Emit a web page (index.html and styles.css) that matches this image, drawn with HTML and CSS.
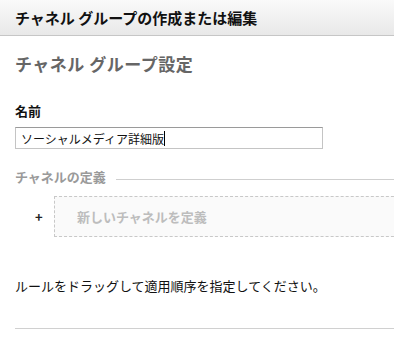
FILE: index.html
```html
<!DOCTYPE html>
<html lang="ja">
<head>
<meta charset="utf-8">
<link rel="stylesheet" href="styles.css">
</head>
<body>
<div class="header">チャネル グループの作成または編集</div>
<div class="content">
  <h2 class="section-title">チャネル グループ設定</h2>
  <div class="field-label">名前</div>
  <div class="input"><span>ソーシャルメディア詳細版</span><span class="caret"></span></div>
  <div class="legend-row">
    <span class="legend">チャネルの定義</span>
    <span class="legend-line"></span>
  </div>
  <div class="def-row">
    <span class="plus">+</span>
    <div class="def-box">新しいチャネルを定義</div>
  </div>
  <p class="hint">ルールをドラッグして適用順序を指定してください。</p>
  <div class="rule"></div>
</div>
</body>
</html>
```
FILE: styles.css
```css
html, body {
  margin: 0;
  padding: 0;
  background: #fff;
  font-family: "Noto Sans CJK JP", "Liberation Sans", sans-serif;
  color: #111;
  overflow: hidden;
}
.header {
  height: 35px;
  line-height: 35px;
  padding-left: 15px;
  font-size: 15px;
  font-weight: bold;
  color: #111;
  background: linear-gradient(#fafafa, #e8e8e8);
  border-bottom: 1px solid #c6c6c6;
}
.content {
  padding-left: 15px;
}
.section-title {
  margin: 0;
  padding-top: 16px;
  font-size: 17px;
  letter-spacing: 0.5px;
  line-height: 24px;
  font-weight: bold;
  color: #666;
}
.field-label {
  margin-top: 26px;
  font-size: 13px;
  line-height: 18px;
  font-weight: bold;
  color: #111;
}
.input {
  margin-top: 7px;
  width: 301px;
  height: 20px;
  border: 1px solid #c4c4c4;
  border-top-color: #9a9a9a;
  padding: 0 0 0 5px;
  display: flex;
  align-items: center;
  font-size: 12px;
  color: #111;
}
.caret {
  display: inline-block;
  width: 1px;
  height: 15px;
  background: #000;
}
.legend-row {
  margin-top: 19px;
  display: flex;
  align-items: center;
  height: 18px;
}
.legend {
  font-size: 13px;
  font-weight: bold;
  color: #9a9a9a;
  line-height: 18px;
}
.legend-line {
  flex: 1;
  height: 1px;
  background: #cfcfcf;
  margin-left: 10px;
  margin-top: 4px;
}
.def-row {
  margin-top: 10px;
  display: flex;
  align-items: center;
}
.plus {
  width: 39px;
  padding-left: 20px;
  box-sizing: border-box;
  font-size: 13px;
  font-weight: bold;
  color: #222;
}
.def-box {
  flex: 1;
  height: 39px;
  margin-right: -10px;
  border: 1px dashed #c8c8c8;
  background: #fafafa;
  padding-left: 22px;
  display: flex;
  align-items: center;
  font-size: 13px;
  font-weight: bold;
  color: #bdbdbd;
}
.hint {
  margin: 40px 0 0;
  font-size: 13px;
  line-height: 18px;
  color: #111;
}
.rule {
  margin-top: 33px;
  height: 1px;
  background: #d0d0d0;
}
```
